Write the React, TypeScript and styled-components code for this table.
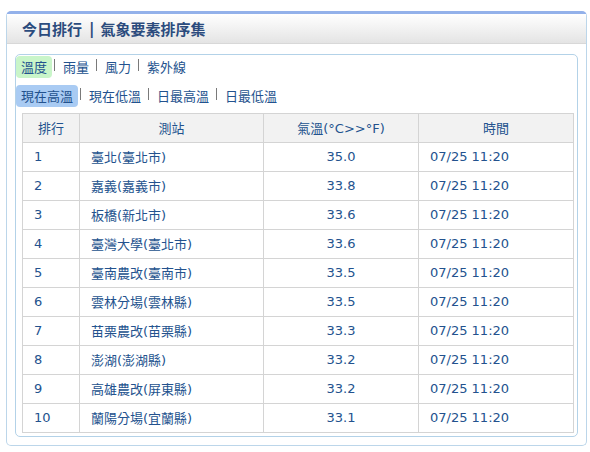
import React from "react";
import styled, { createGlobalStyle } from "styled-components";

const Global = createGlobalStyle`
  html, body { margin: 0; padding: 0; background: #ffffff; }
  body { font-family: "DejaVu Sans", "Noto Sans CJK TC", sans-serif; }
`;

const Page = styled.div`
  padding: 11px 4px 0 6px;
  width: 580px;
`;

const Box = styled.div`
  box-sizing: border-box;
  width: 581px;
  height: 435px;
  border: 1px solid #bcd6ea;
  border-top: 3px solid #93b1ea;
  border-radius: 5px;
  display: flex;
  flex-direction: column;
`;

const Header = styled.div`
  height: 29px;
  flex: none;
  display: flex;
  align-items: center;
  padding-left: 15px;
  background: linear-gradient(#ffffff, #e4e4e4);
  border-bottom: 1px solid #d8d8d8;
  font-family: "Noto Sans CJK TC", sans-serif;
  font-weight: 700;
  font-size: 15px;
  color: #2b4b7d;
`;

const Bar = styled.span`
  margin: 0 6px 0 7px;
  font-family: "DejaVu Sans", sans-serif;
  font-weight: 700;
  font-size: 15px;
`;

const Body = styled.div`
  padding: 10px 8px 0 8px;
`;

const Panel = styled.div`
  box-sizing: border-box;
  height: 383px;
  border: 1px solid #b3d2e8;
  border-radius: 5px;
  padding: 1px 4px 0 0;
`;

const TabRow = styled.div<{ $gap: number }>`
  display: flex;
  align-items: center;
  height: 22px;
  margin-bottom: ${(p) => p.$gap}px;
`;

const Tab = styled.span<{ $bg?: string }>`
  display: inline-block;
  height: 22px;
  line-height: 22px;
  padding: 0 5px;
  border-radius: 4px;
  background: ${(p) => p.$bg || "transparent"};
  font-family: "Noto Sans CJK TC", sans-serif;
  font-size: 13px;
  color: #23528e;
`;

const Sep = styled.span`
  display: inline-block;
  width: 1px;
  height: 12px;
  background: #7a7a7a;
  margin: 0 3px 0 2px;
  position: relative;
  top: -2px;
`;

const Table = styled.table`
  margin: 6px 0 0 6px;
  width: 552px;
  border-collapse: collapse;
  border: 1px solid #cfcfcf;
  table-layout: fixed;
`;

const Th = styled.th`
  height: 28px;
  padding: 0;
  border: 1px solid #d4d4d4;
  background: #f2f2f2;
  font-weight: 400;
  font-family: "Noto Sans CJK TC", sans-serif;
  font-size: 13px;
  color: #23528e;
  text-align: center;
  line-height: 16px;
`;

const Td = styled.td<{ $align?: string; $cjk?: boolean }>`
  height: 28px;
  padding: 0 11px;
  border: 1px solid #d4d4d4;
  font-family: ${(p) =>
    p.$cjk ? `"Noto Sans CJK TC", sans-serif` : `"DejaVu Sans", sans-serif`};
  font-size: 13px;
  color: #23528e;
  text-align: ${(p) => p.$align || "left"};
  line-height: 16px;
  white-space: nowrap;
`;

const Paren = styled.span`
  font-family: "DejaVu Sans", sans-serif;
  font-size: 13px;
`;

const Station = ({ name }: { name: string }) => {
  const m = name.match(/^(.*)\((.*)\)$/);
  if (!m) return <>{name}</>;
  return (
    <>
      {m[1]}
      <Paren>(</Paren>
      {m[2]}
      <Paren>)</Paren>
    </>
  );
};

const rows = [
  ["1", "臺北(臺北市)", "35.0"],
  ["2", "嘉義(嘉義市)", "33.8"],
  ["3", "板橋(新北市)", "33.6"],
  ["4", "臺灣大學(臺北市)", "33.6"],
  ["5", "臺南農改(臺南市)", "33.5"],
  ["6", "雲林分場(雲林縣)", "33.5"],
  ["7", "苗栗農改(苗栗縣)", "33.3"],
  ["8", "澎湖(澎湖縣)", "33.2"],
  ["9", "高雄農改(屏東縣)", "33.2"],
  ["10", "蘭陽分場(宜蘭縣)", "33.1"],
];

const tabs1 = ["溫度", "雨量", "風力", "紫外線"];
const tabs2 = ["現在高溫", "現在低溫", "日最高溫", "日最低溫"];

export default function App() {
  return (
    <>
      <Global />
      <Page>
        <Box>
          <Header>
            今日排行<Bar>|</Bar>氣象要素排序集
          </Header>
          <Body>
            <Panel>
              <TabRow $gap={7}>
                {tabs1.map((t, i) => (
                  <React.Fragment key={t}>
                    {i > 0 && <Sep />}
                    <Tab $bg={i === 0 ? "#c9f5c9" : undefined}>{t}</Tab>
                  </React.Fragment>
                ))}
              </TabRow>
              <TabRow $gap={0}>
                {tabs2.map((t, i) => (
                  <React.Fragment key={t}>
                    {i > 0 && <Sep />}
                    <Tab $bg={i === 0 ? "#a9cbf3" : undefined}>{t}</Tab>
                  </React.Fragment>
                ))}
              </TabRow>
              <Table>
                <colgroup>
                  <col style={{ width: 57 }} />
                  <col style={{ width: 184 }} />
                  <col style={{ width: 155 }} />
                  <col style={{ width: 155 }} />
                </colgroup>
                <thead>
                  <tr>
                    <Th>排行</Th>
                    <Th>測站</Th>
                    <Th>
                      氣溫<Paren>(°C&gt;&gt;°F)</Paren>
                    </Th>
                    <Th>時間</Th>
                  </tr>
                </thead>
                <tbody>
                  {rows.map((r) => (
                    <tr key={r[0]}>
                      <Td>{r[0]}</Td>
                      <Td $cjk>
                        <Station name={r[1]} />
                      </Td>
                      <Td $align="center">{r[2]}</Td>
                      <Td>07/25 11:20</Td>
                    </tr>
                  ))}
                </tbody>
              </Table>
            </Panel>
          </Body>
        </Box>
      </Page>
    </>
  );
}
